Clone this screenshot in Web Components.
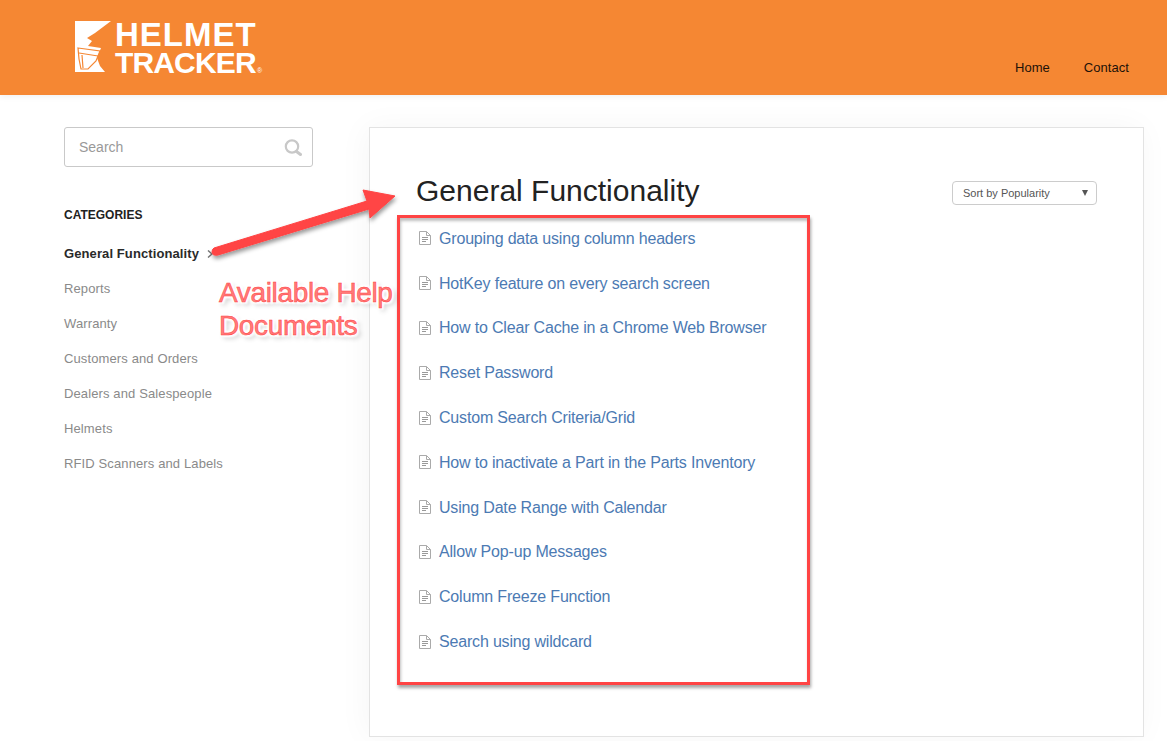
<!DOCTYPE html>
<html>
<head>
<meta charset="utf-8">
<title>General Functionality</title>
<style>
    html, body { margin: 0; height: 741px; overflow: hidden; background: white; }
    body { font-family: "Liberation Sans", Arial, sans-serif; position: relative; }
    .page { display: flex; padding: 32px 23px 0 64px; gap: 56px; }
</style>
</head>
<body>
<site-header>
    <a slot="nav">Home</a>
    <a slot="nav">Contact</a>
</site-header>
<div class="page">
    <help-sidebar></help-sidebar>
    <help-panel heading="General Functionality">
        <doc-item>Grouping data using column headers</doc-item>
        <doc-item>HotKey feature on every search screen</doc-item>
        <doc-item>How to Clear Cache in a Chrome Web Browser</doc-item>
        <doc-item>Reset Password</doc-item>
        <doc-item>Custom Search Criteria/Grid</doc-item>
        <doc-item>How to inactivate a Part in the Parts Inventory</doc-item>
        <doc-item>Using Date Range with Calendar</doc-item>
        <doc-item>Allow Pop-up Messages</doc-item>
        <doc-item>Column Freeze Function</doc-item>
        <doc-item>Search using wildcard</doc-item>
    </help-panel>
</div>
<help-annotations></help-annotations>

<script>
class SiteHeader extends HTMLElement {
    connectedCallback() {
        this.attachShadow({ mode: 'open' });
        this.shadowRoot.innerHTML = `
            <style>
                :host {
                    display: flex;
                    justify-content: space-between;
                    height: 95px;
                    background: #f58733;
                    box-shadow: 0 2px 6px rgba(0, 0, 0, 0.06);
                    padding: 21px 38px 0 75px;
                    box-sizing: border-box;
                }
                .logo { display: flex; gap: 5px; color: white; }
                .mark { width: 36px; height: 52px; display: block; }
                .words { font-weight: bold; line-height: 1; position: relative; margin-left: -1px; }
                .helmet { font-size: 33px; height: 30px; line-height: 27px; letter-spacing: 1px; }
                .tracker { font-size: 30px; height: 24px; line-height: 23px; letter-spacing: -0.85px; }
                .reg { position: absolute; left: 142px; top: 46px; font-size: 7px; font-weight: normal; }
                nav { display: flex; gap: 34px; font-size: 13px; letter-spacing: 0.05px; color: #1d1208; padding-top: 38px; line-height: 17px; }
            </style>
            <div class="logo">
                <svg class="mark" viewBox="0 0 36 52">
                    <path fill="#fff" d="M0 0H36L20 12 12 17 17 20 13 25 26 27 22 37 25 45 30 51H0Z"/>
                    <g fill="none" stroke="#f58733" stroke-width="1.2">
                        <path d="M3 27 25 30 21 40 13 48H6L4 38Z"/>
                        <path d="M4 32 23 35M7 34 8 47"/>
                    </g>
                </svg>
                <div class="words">
                    <div class="helmet">HELMET</div>
                    <div class="tracker">TRACKER</div>
                    <span class="reg">®</span>
                </div>
            </div>
            <nav><slot name="nav"></slot></nav>
        `;
    }
}

class SearchBox extends HTMLElement {
    connectedCallback() {
        this.attachShadow({ mode: 'open' });
        this.shadowRoot.innerHTML = `
            <style>
                :host {
                    display: flex;
                    align-items: center;
                    justify-content: space-between;
                    height: 40px;
                    box-sizing: border-box;
                    border: 1px solid #c9c9c9;
                    border-radius: 3px;
                    padding: 0 10px 0 14px;
                    font-size: 14px;
                    color: #999;
                }
                svg { width: 18px; height: 18px; }
            </style>
            <span>Search</span>
            <svg viewBox="0 0 18 18" fill="none" stroke="#c8c8c8">
                <circle cx="8" cy="8.5" r="6.2" stroke-width="2.2"/>
                <path d="M12.5 13.5 16.5 16.5" stroke-width="3" stroke-linecap="round"/>
            </svg>
        `;
    }
}

class HelpSidebar extends HTMLElement {
    connectedCallback() {
        const categories = ['Reports', 'Warranty', 'Customers and Orders', 'Dealers and Salespeople', 'Helmets', 'RFID Scanners and Labels'];
        this.attachShadow({ mode: 'open' });
        this.shadowRoot.innerHTML = `
            <style>
                :host { display: block; width: 249px; flex: none; }
                h3 {
                    margin: 40px 0 12px;
                    font-size: 12px;
                    line-height: 17px;
                    font-weight: bold;
                    color: #222;
                }
                .cat {
                    display: flex;
                    align-items: center;
                    gap: 8px;
                    height: 35px;
                    font-size: 13px;
                    letter-spacing: 0.12px;
                    color: #8a8a8a;
                }
                .cat.active { font-weight: bold; color: #2a2a2a; letter-spacing: 0.1px; }
                .chev { width: 6px; height: 8px; }
            </style>
            <search-box></search-box>
            <h3>CATEGORIES</h3>
            <div class="cat active">General Functionality
                <svg class="chev" viewBox="0 0 6 8" fill="none" stroke="#777" stroke-width="1.5"><path d="M1 .5 5 4 1 7.5"/></svg>
            </div>
            ${categories.map(c => `<div class="cat">${c}</div>`).join('')}
        `;
    }
}

class HelpPanel extends HTMLElement {
    connectedCallback() {
        this.attachShadow({ mode: 'open' });
        this.shadowRoot.innerHTML = `
            <style>
                :host {
                    display: block;
                    width: 775px;
                    height: 610px;
                    box-sizing: border-box;
                    background: white;
                    border: 1px solid #e3e3e3;
                    box-shadow: -3px 0 30px rgba(0, 0, 0, 0.04);
                    padding: 44px 46px 0 47px;
                }
                .top { display: flex; justify-content: space-between; align-items: flex-start; height: 44.5px; }
                h1 { margin: 0 0 0 -1px; font-size: 30px; line-height: 38px; font-weight: normal; color: #222; }
                .sort {
                    display: flex;
                    align-items: center;
                    justify-content: space-between;
                    width: 145px;
                    height: 24px;
                    margin-top: 9px;
                    box-sizing: border-box;
                    border: 1px solid #ccc;
                    border-radius: 4px;
                    padding: 0 8px 0 10px;
                    font-size: 11px;
                    color: #555;
                }
                .sort i {
                    width: 0;
                    height: 0;
                    border: 3px solid transparent;
                    border-top: 6px solid #555;
                    border-bottom: 0;
                }
            </style>
            <div class="top">
                <h1>${this.getAttribute('heading')}</h1>
                <div class="sort">Sort by Popularity<i></i></div>
            </div>
            <slot></slot>
        `;
    }
}

class DocItem extends HTMLElement {
    connectedCallback() {
        this.attachShadow({ mode: 'open' });
        this.shadowRoot.innerHTML = `
            <style>
                :host {
                    display: flex;
                    align-items: center;
                    gap: 8px;
                    height: 44.8px;
                    padding-left: 2px;
                    font-size: 16px;
                    letter-spacing: -0.18px;
                    color: #4c7ab3;
                }
                svg { width: 12px; height: 14px; flex: none; margin-bottom: 1px; }
            </style>
            <svg viewBox="0 0 12 14" fill="none" stroke="#aaa">
                <path d="M.5.5H7.5L11.5 4.5V13.5H.5Z"/>
                <path d="M7.5.5V4.5H11.5" />
                <path d="M3 6.5H9M3 8.5H9M3 10.5H7" stroke="#999"/>
            </svg>
            <slot></slot>
        `;
    }
}

// screenshot markup: red box, arrow and label drawn on top of the page
class HelpAnnotations extends HTMLElement {
    connectedCallback() {
        this.attachShadow({ mode: 'open' });
        this.shadowRoot.innerHTML = `
            <style>
                :host { position: absolute; inset: 0; display: block; pointer-events: none; }
                .box {
                    position: absolute;
                    left: 397px;
                    top: 215px;
                    width: 413px;
                    height: 470px;
                    box-sizing: border-box;
                    border: 3px solid #ff4444;
                    box-shadow: 1px 3px 3px rgba(0, 0, 0, 0.35), inset 1px 3px 3px rgba(0, 0, 0, 0.25);
                }
                svg { position: absolute; left: 0; top: 0; width: 1167px; height: 741px; }
                .label {
                    position: absolute;
                    left: 219px;
                    top: 276px;
                    font-size: 28px;
                    line-height: 33px;
                    letter-spacing: -0.35px;
                    color: #ff7a7a;
                    -webkit-text-stroke: 0.5px #ff3c3c;
                    text-shadow: 1px 0 1px #fff, -1px 0 1px #fff, 0 1px 1px #fff, 0 -1px 1px #fff,
                        2px 2px 2px #fff, -2px -2px 2px #fff, 2px -2px 2px #fff, -2px 2px 2px #fff,
                        3px 3px 5px rgba(0, 0, 0, 0.3);
                }
            </style>
            <div class="box"></div>
            <svg viewBox="0 0 1167 741">
                <defs>
                    <filter id="drop" x="-10%" y="-30%" width="120%" height="170%">
                        <feDropShadow dx="1" dy="3" stdDeviation="2" flood-color="#000" flood-opacity="0.4"/>
                    </filter>
                </defs>
                <path filter="url(#drop)" fill="#ff4444" stroke="#ff4444" stroke-width="1" stroke-linejoin="round"
                      d="M214 248 367 201 363 190 395 196 370 218 369 209 218 255Q212 256 212 252Q212 249 214 248Z"/>
            </svg>
            <div class="label">Available Help<br>Documents</div>
        `;
    }
}

customElements.define('site-header', SiteHeader);
customElements.define('search-box', SearchBox);
customElements.define('help-sidebar', HelpSidebar);
customElements.define('help-panel', HelpPanel);
customElements.define('doc-item', DocItem);
customElements.define('help-annotations', HelpAnnotations);
</script>
</body>
</html>
